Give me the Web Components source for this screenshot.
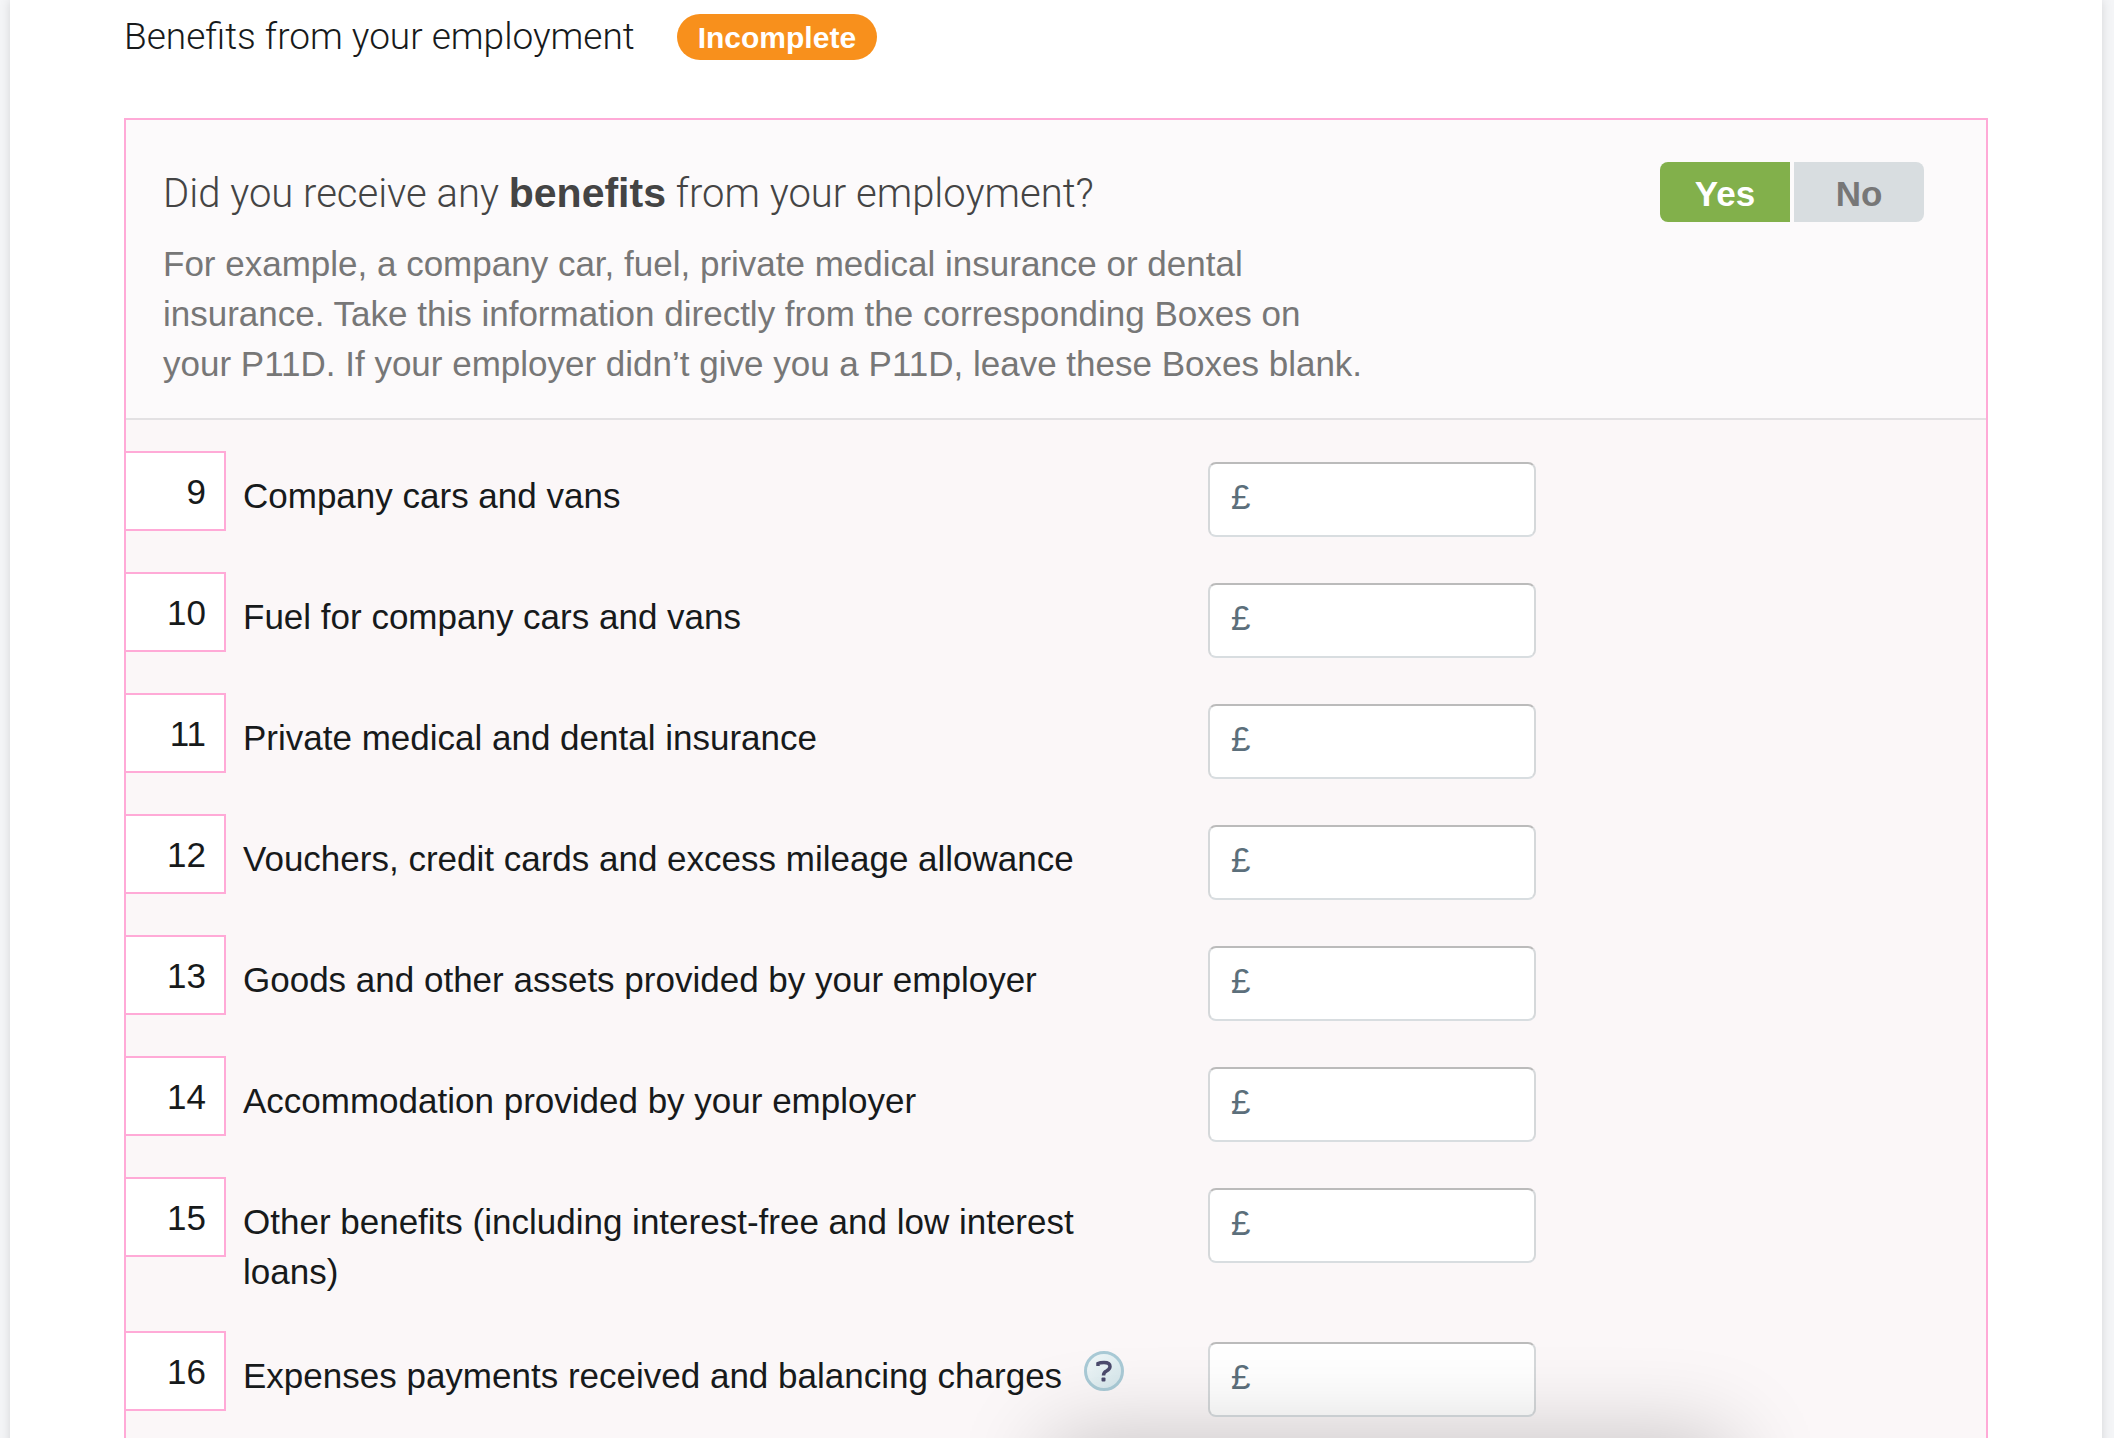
<!DOCTYPE html>
<html lang="en">
<head>
<meta charset="utf-8">
<title>Benefits from your employment</title>
<style>
  html { background: #f4f5f7; }
  body { margin: 0; height: 100vh; overflow: hidden; font-family: "Liberation Sans", Arial, sans-serif; color: #171a1b; }
  b { font: bold 41px "Liberation Sans", Arial, sans-serif; }
</style>
</head>
<body>
<tax-page>
  <section-title slot="heading">Benefits from your employment<status-badge slot="status">Incomplete</status-badge></section-title>
  <question-panel>
    <span slot="question">Did you receive any <b>benefits</b> from your employment?</span>
    <yes-no slot="answer"></yes-no>
    <span slot="hint">For example, a company car, fuel, private medical insurance or dental insurance. Take this information directly from the corresponding Boxes on your P11D. If your employer didn’t give you a P11D, leave these Boxes blank.</span>
    <money-row number="9">Company cars and vans</money-row>
    <money-row number="10">Fuel for company cars and vans</money-row>
    <money-row number="11">Private medical and dental insurance</money-row>
    <money-row number="12">Vouchers, credit cards and excess mileage allowance</money-row>
    <money-row number="13">Goods and other assets provided by your employer</money-row>
    <money-row number="14">Accommodation provided by your employer</money-row>
    <money-row number="15">Other benefits (including interest-free and low interest loans)</money-row>
    <money-row number="16">Expenses payments received and balancing charges<help-button slot="help"></help-button></money-row>
  </question-panel>
</tax-page>
<sheet-shadow></sheet-shadow>

<script>
const define = (name, html, setup) => customElements.define(name, class extends HTMLElement {
  constructor() {
    super();
    this.attachShadow({ mode: 'open' }).innerHTML = html;
  }
  connectedCallback() { if (setup) setup(this, this.shadowRoot); }
});

define('tax-page', `
  <style>
    :host { display: block; box-sizing: border-box; min-height: 100vh; margin: 0 12px 0 10px; padding: 12px 114px 0; background: #fff; box-shadow: 0 0 10px rgba(0,0,0,.13); }
  </style>
  <slot name="heading"></slot>
  <slot></slot>`);

define('section-title', `
  <style>
    :host { display: flex; align-items: center; gap: 42px; height: 50px; margin-bottom: 56px; }
    h2 { margin: 0; font: 300 37px/50px Roboto, "Liberation Sans", sans-serif; }
  </style>
  <h2><slot></slot></h2>
  <slot name="status"></slot>`);

define('status-badge', `
  <style>
    :host { display: block; height: 46px; padding: 0 21px; border-radius: 23px; background: #f8901c; color: #fff; font: bold 30px/48px "Liberation Sans", Arial, sans-serif; }
  </style>
  <slot></slot>`);

define('question-panel', `
  <style>
    :host { display: block; border: 2px solid #ffaad7; background: #fbf7f8; }
    header { padding: 42px 62px 29px 37px; border-bottom: 2px solid #e3e1e3; background: #fcfafb; }
    .top { display: flex; justify-content: space-between; height: 60px; margin-bottom: 17px; }
    h3 { margin: 0; color: #444; font: 300 40px/64px Roboto, "Liberation Sans", sans-serif; }
    p { margin: 0; max-width: 1206px; color: #777; font-size: 35px; line-height: 50px; }
    .rows { padding: 31px 0 40px; }
  </style>
  <header>
    <div class="top"><h3><slot name="question"></slot></h3><slot name="answer"></slot></div>
    <p><slot name="hint"></slot></p>
  </header>
  <div class="rows"><slot></slot></div>`);

define('yes-no', `
  <style>
    :host { display: flex; gap: 4px; height: 60px; }
    button { width: 130px; padding: 3px 0 0; border: 0; background: #d8dde0; color: #777; font: bold 35px/57px "Liberation Sans", Arial, sans-serif; }
    button:first-of-type { border-radius: 8px 0 0 8px; }
    button:last-of-type { border-radius: 0 8px 8px 0; }
    button[aria-pressed=true] { background: #82b04b; color: #fff; }
  </style>
  <button type="button" aria-pressed="true">Yes</button>
  <button type="button" aria-pressed="false">No</button>`,
  (host, root) => root.querySelectorAll('button').forEach((button, i, all) =>
    button.addEventListener('click', () => all.forEach(b => b.setAttribute('aria-pressed', b === button)))));

define('money-row', `
  <style>
    :host { display: grid; grid-template-columns: 100px 982px 328px; align-items: start; min-height: 121px; }
    .number { box-sizing: border-box; height: 80px; padding-right: 18px; border: 2px solid #ffaad7; border-left: 0; background: #fff; font-size: 35px; line-height: 78px; text-align: right; }
    .text { display: flex; gap: 22px; padding: 20px 60px 34px 17px; font-size: 35px; line-height: 50px; }
    .field { display: flex; box-sizing: border-box; height: 75px; margin-top: 11px; padding: 0 20px 0 21px; border: 2px solid #d5d8da; border-top-color: #bbb; border-bottom-color: #d8dde0; border-radius: 8px; background: #fff; color: #5c6f7b; font-size: 35px; line-height: 66px; }
    input { flex: 1; min-width: 0; border: 0; outline: 0; background: none; color: #171a1b; font: inherit; }
  </style>
  <div class="number"></div>
  <div class="text"><label for="amount"><slot></slot></label><slot name="help"></slot></div>
  <div class="field"><span>£</span><input id="amount" type="text" inputmode="decimal"></div>`,
  (host, root) => { root.querySelector('.number').textContent = host.getAttribute('number'); });

define('help-button', `
  <style>
    :host { display: block; flex: none; }
    button { display: block; padding: 0; border: 0; background: none; }
    svg { display: block; }
  </style>
  <button type="button" aria-label="Help">
    <svg width="40" height="40" viewBox="0 0 40 40">
      <defs><linearGradient id="g" x2="1" y2="1"><stop offset="0" stop-color="#f2f8f9"/><stop offset="1" stop-color="#d3e5ea"/></linearGradient></defs>
      <circle cx="20" cy="20" r="18.500" fill="url(#g)" stroke="#a9cad6" stroke-width="3"/>
      <path d="M14 15V12.500Q16 11.500 20 11.500Q26 11.500 26 15.500Q26 18 22.500 20Q19.500 21.500 19.500 24.500" fill="none" stroke="#4b4a6c" stroke-width="3.500"/>
      <rect x="17.500" y="26.500" width="4" height="4" rx="1" fill="#4b4a6c"/>
    </svg>
  </button>`);

define('sheet-shadow', `
  <style>
    :host { position: fixed; left: 1050px; right: 384px; top: 100%; height: 200px; box-shadow: 0 0 90px rgba(0,0,0,.22); pointer-events: none; }
  </style>`);
</script>
</body>
</html>
